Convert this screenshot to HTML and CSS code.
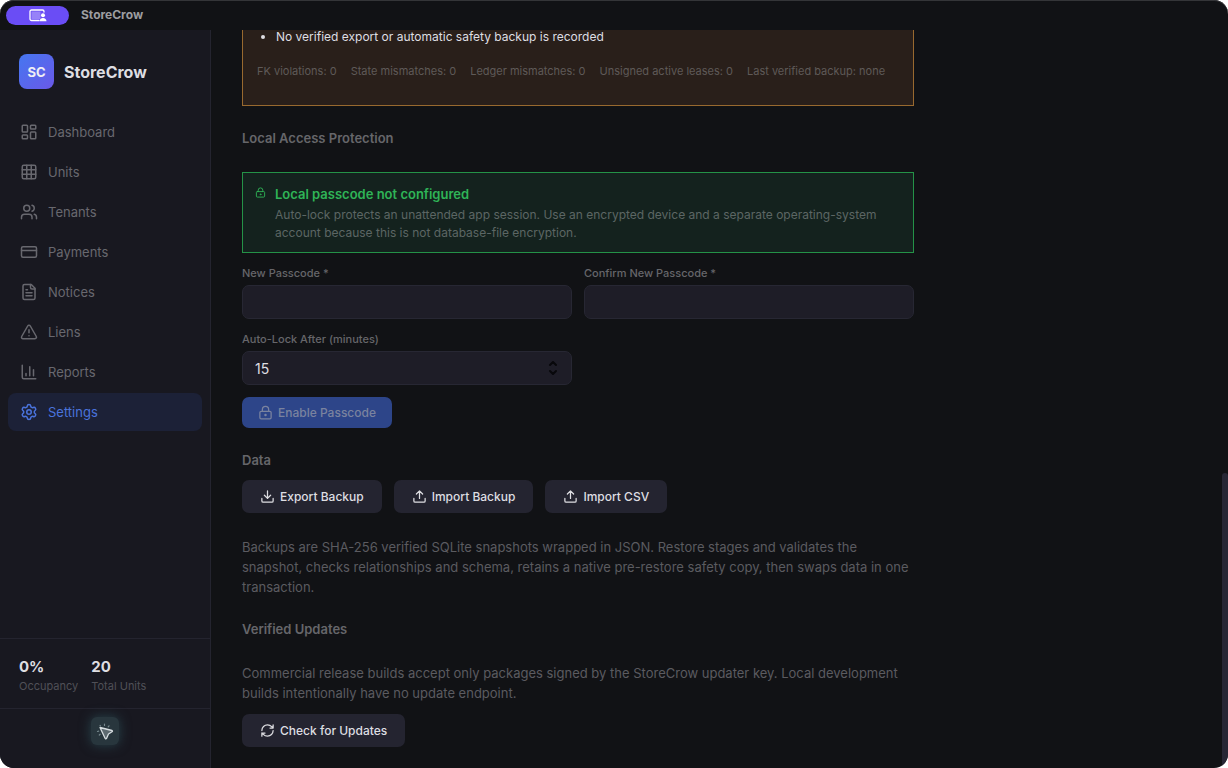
FILE: index.html
```html
<!DOCTYPE html>
<html lang="en">
<head>
    <meta charset="UTF-8">
    <meta name="viewport" content="width=device-width, initial-scale=1.0">
    <title>StoreCrow</title>
    <link rel="stylesheet" href="styles.css">
</head>
<body>
    <div class="window">
        <header class="titlebar">
            <button type="button" class="share-pill" aria-label="Screen sharing">
                <svg width="18" height="13" viewBox="0 0 18 13" fill="none">
                    <path d="M10 11.5H2.500a1.500 1.500 0 0 1-1.500-1.500V2.500A1.500 1.500 0 0 1 2.500 1h11A1.500 1.500 0 0 1 15 2.500V3" stroke="#fff" stroke-width="1.300" stroke-linecap="round"/>
                    <rect x="2.500" y="2.500" width="9" height="7.500" fill="#fff" opacity=".3"/>
                    <circle cx="14" cy="6.200" r="2" fill="#fff"/>
                    <path d="M10.500 12.300c0-2 1.500-3.300 3.500-3.300s3.500 1.300 3.500 3.300z" fill="#fff"/>
                </svg>
            </button>
            <span class="window-title">StoreCrow</span>
        </header>

        <div class="layout">
            <aside class="sidebar">
                <div class="brand">
                    <div class="brand-logo">SC</div>
                    <span class="brand-name">StoreCrow</span>
                </div>

                <nav class="nav">
                    <a href="#dashboard" class="nav-item">
                        <svg class="icon" viewBox="0 0 24 24"><rect x="3" y="3" width="7" height="9" rx="1"/><rect x="14" y="3" width="7" height="5" rx="1"/><rect x="14" y="12" width="7" height="9" rx="1"/><rect x="3" y="16" width="7" height="5" rx="1"/></svg>
                        Dashboard
                    </a>
                    <a href="#units" class="nav-item">
                        <svg class="icon" viewBox="0 0 24 24"><rect x="3" y="3" width="18" height="18" rx="2"/><path d="M3 9h18M3 15h18M9 3v18M15 3v18"/></svg>
                        Units
                    </a>
                    <a href="#tenants" class="nav-item">
                        <svg class="icon" viewBox="0 0 24 24"><path d="M16 21v-2a4 4 0 0 0-4-4H6a4 4 0 0 0-4 4v2"/><circle cx="9" cy="7" r="4"/><path d="M22 21v-2a4 4 0 0 0-3-3.870M16 3.130a4 4 0 0 1 0 7.750"/></svg>
                        Tenants
                    </a>
                    <a href="#payments" class="nav-item">
                        <svg class="icon" viewBox="0 0 24 24"><rect x="2" y="5" width="20" height="14" rx="2"/><path d="M2 10h20"/></svg>
                        Payments
                    </a>
                    <a href="#notices" class="nav-item">
                        <svg class="icon" viewBox="0 0 24 24"><path d="M15 2H6a2 2 0 0 0-2 2v16a2 2 0 0 0 2 2h12a2 2 0 0 0 2-2V7z"/><path d="M14 2v4a2 2 0 0 0 2 2h4M10 9H8M16 13H8M16 17H8"/></svg>
                        Notices
                    </a>
                    <a href="#liens" class="nav-item">
                        <svg class="icon" viewBox="0 0 24 24"><path d="m21.730 18-8-14a2 2 0 0 0-3.480 0l-8 14A2 2 0 0 0 4 21h16a2 2 0 0 0 1.730-3M12 9v4M12 17h.01"/></svg>
                        Liens
                    </a>
                    <a href="#reports" class="nav-item">
                        <svg class="icon" viewBox="0 0 24 24"><path d="M3 3v16a2 2 0 0 0 2 2h16M18 17V9M13 17V5M8 17v-3"/></svg>
                        Reports
                    </a>
                    <a href="#settings" class="nav-item active">
                        <svg class="icon" viewBox="0 0 24 24"><path d="M9.671 4.136a2.340 2.340 0 0 1 4.659 0 2.340 2.340 0 0 0 3.319 1.915 2.340 2.340 0 0 1 2.330 4.033 2.340 2.340 0 0 0 0 3.831 2.340 2.340 0 0 1-2.330 4.033 2.340 2.340 0 0 0-3.319 1.915 2.340 2.340 0 0 1-4.659 0 2.340 2.340 0 0 0-3.320-1.915 2.340 2.340 0 0 1-2.330-4.033 2.340 2.340 0 0 0 0-3.831A2.340 2.340 0 0 1 6.350 6.051a2.340 2.340 0 0 0 3.319-1.915"/><circle cx="12" cy="12" r="3"/></svg>
                        Settings
                    </a>
                </nav>

                <div class="stats">
                    <div class="stat">
                        <span class="stat-value">0%</span>
                        <span class="stat-label">Occupancy</span>
                    </div>
                    <div class="stat">
                        <span class="stat-value">20</span>
                        <span class="stat-label">Total Units</span>
                    </div>
                </div>

                <div class="sidebar-footer">
                    <button type="button" class="cursor-btn" aria-label="Pointer">
                        <svg width="20" height="20" viewBox="0 0 20 20" fill="none" stroke-linecap="round" stroke-linejoin="round">
                            <path d="M5 6.500 17 9.500Q18 10 17 10.800L13.500 13 11.500 17.500Q10.800 18.500 10.200 17.500Z" fill="#5d6a70" stroke="#d5dcdf" stroke-width="1.300"/>
                            <path d="M9.500 3.200v1.200M14 4.800l-.8 1M5 4.400l.4.500M2.500 10.500l1.200-.3M4.300 14l.9-.9" stroke="#75878c" stroke-width="1.200"/>
                        </svg>
                    </button>
                </div>
            </aside>

            <main class="content">
                <div class="settings">
                    <section class="alert alert-warning">
                        <ul class="issues">
                            <li>No verified export or automatic safety backup is recorded</li>
                        </ul>
                        <div class="checks">
                            <span>FK violations: 0</span>
                            <span>State mismatches: 0</span>
                            <span>Ledger mismatches: 0</span>
                            <span>Unsigned active leases: 0</span>
                            <span>Last verified backup: none</span>
                        </div>
                    </section>

                    <h2 class="section-title">Local Access Protection</h2>

                    <section class="alert alert-success">
                        <svg class="icon icon-xs" viewBox="0 0 24 24"><circle cx="12" cy="16" r="1"/><rect x="3" y="10" width="18" height="12" rx="2"/><path d="M7 10V7a5 5 0 0 1 10 0v3"/></svg>
                        <div>
                            <h3>Local passcode not configured</h3>
                            <p>Auto-lock protects an unattended app session. Use an encrypted device and a separate operating-system account because this is not database-file encryption.</p>
                        </div>
                    </section>

                    <form class="passcode-form">
                        <div class="form-group">
                            <label for="newPasscode">New Passcode *</label>
                            <input type="password" id="newPasscode" name="newPasscode">
                        </div>
                        <div class="form-group">
                            <label for="confirmPasscode">Confirm New Passcode *</label>
                            <input type="password" id="confirmPasscode" name="confirmPasscode">
                        </div>
                        <div class="form-group">
                            <label for="autoLock">Auto-Lock After (minutes)</label>
                            <div class="number-field">
                                <input type="number" id="autoLock" name="autoLock" value="15" min="1">
                                <svg class="stepper" width="10" height="14" viewBox="0 0 10 14"><path d="M2 4 5 1l3 3M2 10l3 3 3-3"/></svg>
                            </div>
                        </div>
                        <div class="form-actions">
                            <button type="submit" class="btn btn-primary" disabled>
                                <svg class="icon icon-sm" viewBox="0 0 24 24"><circle cx="12" cy="16" r="1"/><rect x="3" y="10" width="18" height="12" rx="2"/><path d="M7 10V7a5 5 0 0 1 10 0v3"/></svg>
                                Enable Passcode
                            </button>
                        </div>
                    </form>

                    <h2 class="section-title">Data</h2>
                    <div class="button-row">
                        <button type="button" class="btn">
                            <svg class="icon icon-sm" viewBox="0 0 24 24"><path d="M12 15V3M21 15v4a2 2 0 0 1-2 2H5a2 2 0 0 1-2-2v-4M7 10l5 5 5-5"/></svg>
                            Export Backup
                        </button>
                        <button type="button" class="btn">
                            <svg class="icon icon-sm" viewBox="0 0 24 24"><path d="M12 3v12M17 8l-5-5-5 5M21 15v4a2 2 0 0 1-2 2H5a2 2 0 0 1-2-2v-4"/></svg>
                            Import Backup
                        </button>
                        <button type="button" class="btn">
                            <svg class="icon icon-sm" viewBox="0 0 24 24"><path d="M12 3v12M17 8l-5-5-5 5M21 15v4a2 2 0 0 1-2 2H5a2 2 0 0 1-2-2v-4"/></svg>
                            Import CSV
                        </button>
                    </div>
                    <p class="help-text">Backups are SHA-256 verified SQLite snapshots wrapped in JSON. Restore stages and validates the snapshot, checks relationships and schema, retains a native pre-restore safety copy, then swaps data in one transaction.</p>

                    <h2 class="section-title">Verified Updates</h2>
                    <p class="help-text">Commercial release builds accept only packages signed by the StoreCrow updater key. Local development builds intentionally have no update endpoint.</p>
                    <div class="button-row">
                        <button type="button" class="btn">
                            <svg class="icon icon-sm" viewBox="0 0 24 24"><path d="M3 12a9 9 0 0 1 9-9 9.750 9.750 0 0 1 6.740 2.740L21 8M21 3v5h-5M21 12a9 9 0 0 1-9 9 9.750 9.750 0 0 1-6.740-2.740L3 16M8 16H3v5"/></svg>
                            Check for Updates
                        </button>
                    </div>
                </div>
                <div class="scroll-thumb"></div>
            </main>
        </div>
    </div>
</body>
</html>
```
FILE: styles.css
```css
* {
    margin: 0;
    padding: 0;
    box-sizing: border-box;
}

body {
    background-color: #fff;
    color: #dedee2;
    font-family: Inter, sans-serif;
    font-size: 13px;
    line-height: 20px;
    overflow: hidden;
}

button,
input {
    font-family: inherit;
}

.window {
    display: flex;
    flex-direction: column;
    height: 100vh;
    background-color: #111215;
    border-radius: 14px;
    box-shadow: inset 0 1px 0 #343538;
    overflow: hidden;
}

.titlebar {
    display: flex;
    align-items: center;
    gap: 12px;
    height: 30px;
    padding: 0 6px;
    flex-shrink: 0;
}

.share-pill {
    display: flex;
    align-items: center;
    justify-content: center;
    width: 63px;
    height: 19px;
    border: none;
    border-radius: 10px;
    background-color: #6a4df5;
}

.window-title {
    color: #9d9da0;
    font-weight: 700;
    font-size: 12px;
}

.layout {
    display: flex;
    flex: 1;
    min-height: 0;
}

/* Sidebar */
.sidebar {
    display: flex;
    flex-direction: column;
    width: 211px;
    flex-shrink: 0;
    background-color: #181820;
    border-right: 1px solid #24242f;
}

.brand {
    display: flex;
    align-items: center;
    gap: 10px;
    padding: 24px 19px;
}

.brand-logo {
    display: flex;
    align-items: center;
    justify-content: center;
    width: 35px;
    height: 35px;
    border-radius: 8px;
    background: linear-gradient(135deg, #4577f0, #6a58e8);
    color: #eeeef4;
    font-weight: 700;
}

.brand-name {
    font-size: 16px;
    font-weight: 700;
}

.nav {
    display: flex;
    flex-direction: column;
    gap: 2px;
    flex: 1;
    padding: 0 8px;
}

.nav-item {
    display: flex;
    align-items: center;
    gap: 10px;
    padding: 9px 12px;
    border-radius: 8px;
    color: #68686f;
    text-decoration: none;
}

.nav-item.active {
    background-color: #1c2137;
    color: #4a73dc;
}

.icon {
    width: 18px;
    height: 18px;
    flex-shrink: 0;
    fill: none;
    stroke: currentColor;
    stroke-width: 2;
    stroke-linecap: round;
    stroke-linejoin: round;
}

.icon-sm {
    width: 15px;
    height: 15px;
}

.icon-xs {
    width: 11px;
    height: 11px;
}

.stats {
    display: flex;
    gap: 13px;
    padding: 18px 19px 12px;
    border-top: 1px solid #24242f;
}

.stat {
    display: flex;
    flex-direction: column;
}

.stat-value {
    font-size: 15px;
    font-weight: 700;
}

.stat-label {
    color: #505057;
    font-size: 11px;
    line-height: 19px;
}

.sidebar-footer {
    display: flex;
    justify-content: center;
    padding: 8px 0 23px;
    border-top: 1px solid #24242f;
}

.cursor-btn {
    display: flex;
    align-items: center;
    justify-content: center;
    width: 28px;
    height: 28px;
    border: none;
    border-radius: 6px;
    background-color: #28363d;
    box-shadow: 0 0 12px #28434b;
}

/* Settings page */
.content {
    position: relative;
    flex: 1;
    padding: 0 31px;
    overflow: hidden;
}

.settings {
    max-width: 672px;
}

.scroll-thumb {
    position: absolute;
    right: 0;
    bottom: 0;
    width: 6px;
    height: 40%;
    border-radius: 3px 3px 0 0;
    background-color: #272735;
}

.alert-warning {
    padding: 0 14px 24px;
    border: 1px solid #98692f;
    border-top: none;
    background-color: #291f1a;
}

.issues {
    padding-left: 19px;
    font-size: 12px;
    line-height: 14px;
    margin-bottom: 17px;
}

.checks {
    display: flex;
    gap: 14px;
    color: #5f5a58;
    font-size: 11px;
    white-space: nowrap;
}

.section-title {
    margin: 22px 0 10px;
    color: #66666a;
    font-size: 13px;
    font-weight: 600;
}

.alert-success {
    display: flex;
    gap: 9px;
    margin-top: 24px;
    padding: 10px 12px;
    border: 1px solid #249247;
    background-color: #14221e;
    color: #2fb457;
}

.alert-success .icon {
    margin-top: 4px;
}

.alert-success h3 {
    margin-bottom: 1px;
    font-size: 13px;
    font-weight: 600;
    line-height: 22px;
}

.alert-success p {
    color: #5c6664;
    font-size: 12px;
    line-height: 18px;
}

.passcode-form {
    display: grid;
    grid-template-columns: 1fr 1fr;
    gap: 12px;
    margin-top: 12px;
}

.form-group label {
    display: block;
    margin-bottom: 4px;
    color: #66666a;
    font-size: 11px;
    font-weight: 500;
    line-height: 16px;
}

.form-group input {
    display: block;
    width: 100%;
    height: 34px;
    padding: 0 12px;
    border: 1px solid #272733;
    border-radius: 7px;
    background-color: #1e1d27;
    color: #dedee2;
    font-size: 14px;
    appearance: textfield;
}

.form-group input::-webkit-inner-spin-button {
    display: none;
}

.number-field {
    position: relative;
}

.stepper {
    position: absolute;
    top: 10px;
    right: 14px;
    fill: none;
    stroke: #08080b;
    stroke-width: 2;
    stroke-linecap: round;
    stroke-linejoin: round;
}

.form-actions {
    grid-column: 1 / -1;
}

.btn {
    display: flex;
    align-items: center;
    gap: 5px;
    height: 33px;
    padding: 0 18px;
    border: none;
    border-radius: 7px;
    background-color: #242430;
    color: #dedee2;
    font-size: 12px;
    font-weight: 500;
}

.btn-primary {
    height: 31px;
    padding: 0 16px;
    background-color: #2d4589;
    color: #7a839f;
}

.button-row {
    display: flex;
    gap: 12px;
}

.help-text {
    margin: 24px 0 11px;
    color: #5b5b60;
}
```
